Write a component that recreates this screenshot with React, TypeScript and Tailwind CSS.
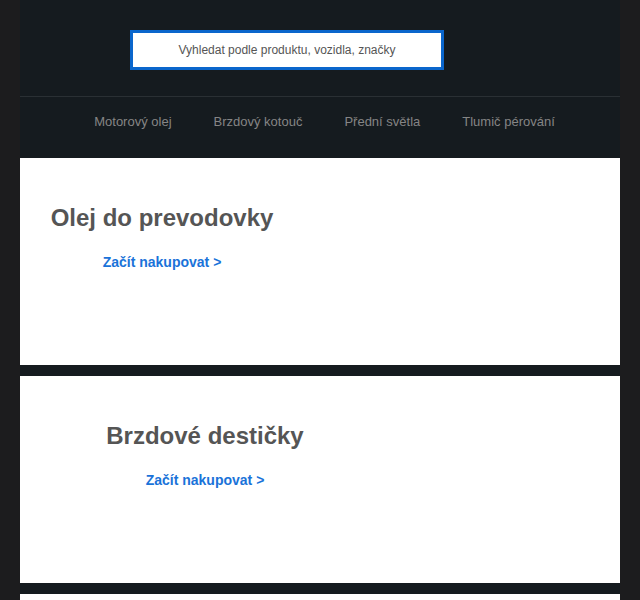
const navItems = ["Motorový olej", "Brzdový kotouč", "Přední světla", "Tlumič pérování"];

const banners = [
  { title: "Olej do prevodovky", width: "w-[284px]" },
  { title: "Brzdové destičky", width: "w-[370px]" },
];

function Banner({ title, width }: { title: string; width: string }) {
  return (
    <section className="h-[207px] bg-white pt-[46px]">
      <div className={`flex flex-col items-center text-center ${width}`}>
        <h2 className="text-[24px] font-bold leading-[1.15] text-[#555555]">{title}</h2>
        <a href="#" className="mt-[22px] text-[14px] font-bold leading-[1.15] text-[#1a73d9]">
          Začít nakupovat &gt;
        </a>
      </div>
    </section>
  );
}

export default function App() {
  return (
    <div className="min-h-screen bg-[#1c1c1e] px-5 font-['Liberation_Sans',Arial,sans-serif]">
      <div className="bg-[#151b1f]">
        <header className="border-b border-[#2a3034] pb-[26px] pt-[30px]">
          <div className="ml-[110px] flex h-[40px] w-[314px] items-center justify-center border-[3px] border-[#0a66cc] bg-white">
            <span className="text-[12px] text-[#555555]">Vyhledat podle produktu, vozidla, značky</span>
          </div>
        </header>
        <nav className="flex h-[61px] justify-center gap-[42px] pl-[9px] pt-[17px]">
          {navItems.map((item) => (
            <a key={item} href="#" className="text-[13px] leading-[15px] text-[#858585]">
              {item}
            </a>
          ))}
        </nav>
        <div className="flex flex-col gap-[11px]">
          {banners.map((b) => (
            <Banner key={b.title} title={b.title} width={b.width} />
          ))}
          <section className="h-[207px] bg-white" />
        </div>
      </div>
    </div>
  );
}
